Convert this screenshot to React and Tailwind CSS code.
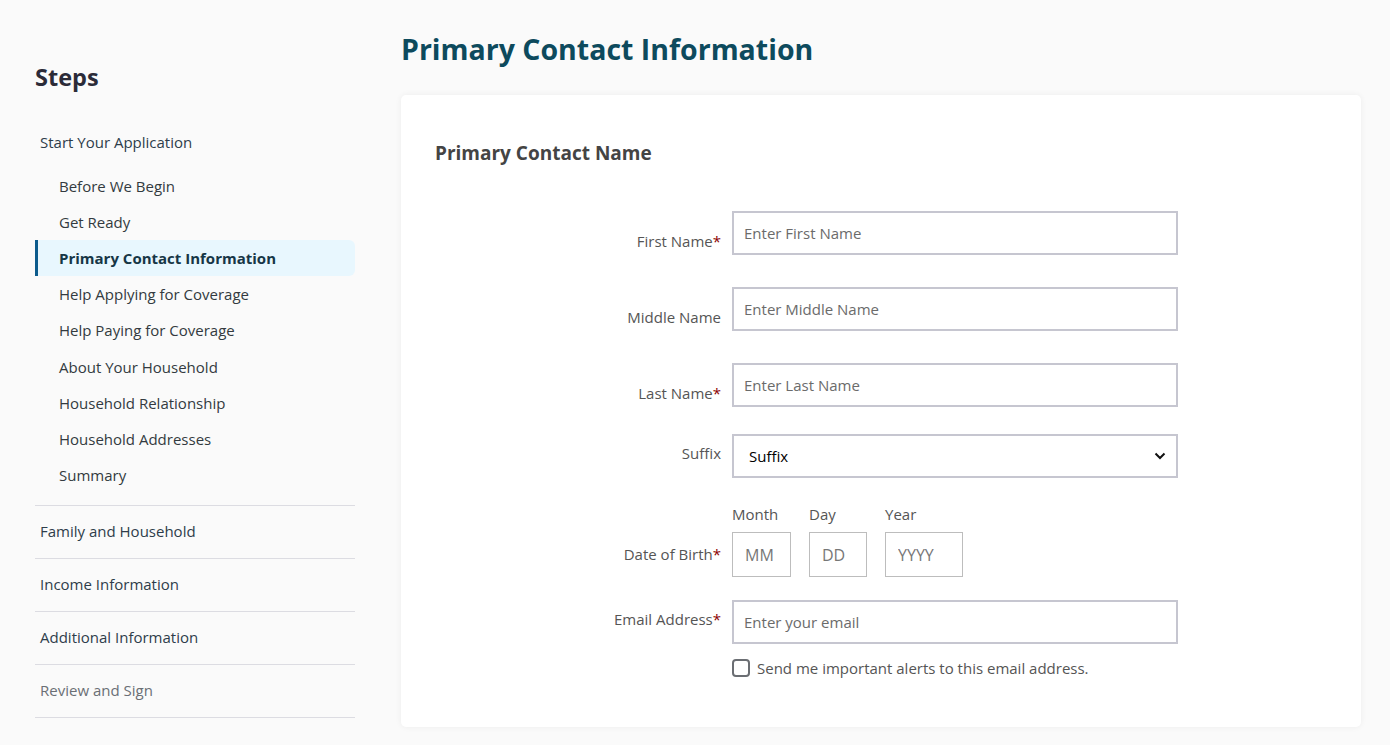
const subSteps = [
  "Before We Begin",
  "Get Ready",
  "Primary Contact Information",
  "Help Applying for Coverage",
  "Help Paying for Coverage",
  "About Your Household",
  "Household Relationship",
  "Household Addresses",
  "Summary",
];

const otherSteps = [
  { label: "Family and Household", muted: false },
  { label: "Income Information", muted: false },
  { label: "Additional Information", muted: false },
  { label: "Review and Sign", muted: true },
];

const Required = () => <span className="text-[#8b0000]">*</span>;

const Sidebar = () => (
  <aside className="w-[320px] shrink-0 pt-[62px]">
    <h2 className="text-[23.5px] leading-[30px] font-bold text-[#2b2b38]">Steps</h2>

    <div className="mt-[38px] pl-[5px] text-[15px] leading-[24px] text-[#2e3d4a]">Start Your Application</div>

    <ul className="mt-[14px] pb-[11px] border-b border-[#dcdce2]">
      {subSteps.map((step) => {
        const active = step === "Primary Contact Information";
        return (
          <li
            key={step}
            className={
              active
                ? "h-[36px] flex items-center pl-[21px] bg-[#e8f7fe] border-l-[3px] border-[#0c5b8c] rounded-r-md text-[15px] font-bold text-[#163646]"
                : "h-[36.2px] flex items-center pl-[24px] text-[15px] text-[#333a40]"
            }>
            {step}
          </li>
        );
      })}
    </ul>

    {otherSteps.map((s) => (
      <div
        key={s.label}
        className={`h-[53px] flex items-center pl-[5px] border-b border-[#dcdce2] text-[15px] ${
          s.muted ? "text-[#6a6f75]" : "text-[#2e3d4a]"
        }`}>
        {s.label}
      </div>
    ))}
  </aside>
);

const inputCls =
  "w-[446px] h-[44px] border-2 border-[#c6c6d0] px-[10px] text-[15px] text-[#222] placeholder:text-[#6b6b6b] outline-none bg-white";

const FormRow = ({ label, required, labelPad, children, className }) => (
  <div className={`flex items-start ${className || ""}`}>
    <label className={`w-[297px] shrink-0 pr-[11px] text-right text-[15px] leading-[20px] text-[#555] ${labelPad}`}>
      {label}
      {required && <Required />}
    </label>
    <div>{children}</div>
  </div>
);

const App = () => {
  return (
    <div
      className="min-h-[745px] bg-[#fafafa] flex pl-[35px] pr-[29px]"
      style={{ fontFamily: '"Open Sans", "Noto Sans", sans-serif' }}>
      <Sidebar />

      <main className="ml-[46px] flex-1">
        <h1 className="mt-[30px] text-[28.5px] leading-[38px] font-bold text-[#0d4a5d]">Primary Contact Information</h1>

        <div className="mt-[27px] bg-white rounded-[5px] shadow-[0_0_6px_rgba(0,0,0,0.06)] pl-[34px] pt-[44px] pb-[47px]">
          <h3 className="text-[19px] leading-[28px] font-bold text-[#444]">Primary Contact Name</h3>

          <form className="mt-[44px]">
            <FormRow label="First Name" required labelPad="pt-[20px]">
              <input className={inputCls} placeholder="Enter First Name" />
            </FormRow>

            <FormRow label="Middle Name" labelPad="pt-[20px]" className="mt-[32px]">
              <input className={inputCls} placeholder="Enter Middle Name" />
            </FormRow>

            <FormRow label="Last Name" required labelPad="pt-[20px]" className="mt-[32px]">
              <input className={inputCls} placeholder="Enter Last Name" />
            </FormRow>

            <FormRow label="Suffix" labelPad="pt-[9px]" className="mt-[27px]">
              <div className="relative w-[446px] h-[44px] border-2 border-[#c6c6d0] bg-white flex items-center pl-[15px] text-[15px] text-black">
                Suffix
                <svg
                  className="absolute right-[10px] top-1/2 -translate-y-1/2"
                  width="12"
                  height="8"
                  viewBox="0 0 12 8"
                  fill="none"
                  stroke="#111"
                  strokeWidth="2">
                  <path d="M1.5 1.5 6 6l4.5-4.5" />
                </svg>
              </div>
            </FormRow>

            <FormRow label="Date of Birth" required labelPad="pt-[40px]" className="mt-[26px]">
              <div className="flex gap-[18px]">
                {[
                  { t: "Month", p: "MM", w: "w-[59px]" },
                  { t: "Day", p: "DD", w: "w-[58px]" },
                  { t: "Year", p: "YYYY", w: "w-[78px]" },
                ].map((d) => (
                  <div key={d.t} className="flex flex-col">
                    <span className="text-[15px] leading-[20px] text-[#555]">{d.t}</span>
                    <input
                      className={`${d.w} mt-[8px] h-[45px] border border-[#bdbdbd] px-[12px] text-[16px] placeholder:text-[#777] outline-none bg-white`}
                      placeholder={d.p}
                    />
                  </div>
                ))}
              </div>
            </FormRow>

            <FormRow label="Email Address" required labelPad="pt-[9px]" className="mt-[23px]">
              <input className={inputCls} placeholder="Enter your email" />
              <label className="mt-[13px] flex items-center gap-[7px] text-[15px] text-[#555]">
                <span className="w-[18px] h-[18px] rounded-[4px] border-2 border-[#6b6e73] bg-white" />
                Send me important alerts to this email address.
              </label>
            </FormRow>
          </form>
        </div>
      </main>
    </div>
  );
};

export default App;
